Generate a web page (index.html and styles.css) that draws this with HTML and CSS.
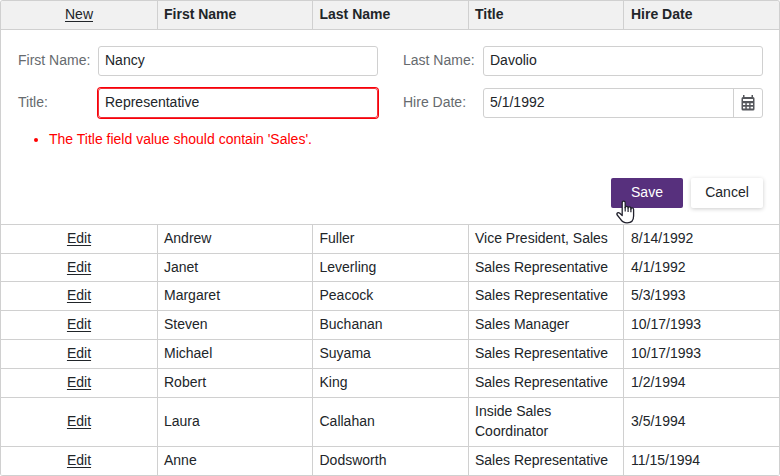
FILE: index.html
```html
<!DOCTYPE html>
<html lang="en">
<head>
<meta charset="utf-8">
<title>Employees</title>
<link rel="stylesheet" href="styles.css">
</head>
<body>
<main class="grid">
  <div class="row header"><div class="cell command"><a>New</a></div><div class="cell">First Name</div><div class="cell">Last Name</div><div class="cell">Title</div><div class="cell">Hire Date</div></div>
  <form class="edit-form">
    <div class="fields">
      <label class="field"><span class="caption">First Name:</span><span class="box">Nancy</span></label>
      <label class="field"><span class="caption">Last Name:</span><span class="box">Davolio</span></label>
      <label class="field"><span class="caption">Title:</span><span class="box invalid">Representative</span></label>
      <label class="field"><span class="caption">Hire Date:</span><span class="box date"><span>5/1/1992</span><span class="picker"><svg width="14" height="16" viewBox="0 0 14 16"><path fill="#55575c" fill-rule="evenodd" d="M2 0h1.500v2h7V0H12v2a1.500 1.500 0 0 1 1.500 1.500V14a1.500 1.500 0 0 1-1.500 1.500H2A1.500 1.500 0 0 1 .5 14V3.500A1.500 1.500 0 0 1 2 2ZM2 4v2h10V4ZM2 8.200v1.900h2.300V8.200Zm3.800 0v1.900h2.400V8.200Zm3.800 0v1.900H12V8.200ZM2 11.700v1.900h2.300v-1.900Zm3.800 0v1.900h2.400v-1.900Zm3.800 0v1.900H12v-1.900Z"/></svg></span></span></label>
    </div>
    <ul class="errors"><li>The Title field value should contain 'Sales'.</li></ul>
    <div class="buttons">
      <div class="button primary">Save
        <svg class="pointer" width="20" height="25" viewBox="0 0 20 25"><path fill="#fff" stroke="#20202c" stroke-width="1.300" stroke-linejoin="round" d="M6.200 15.500V2.700c0-2.200 3-2.200 3 0v5c0-1.900 2.900-1.900 2.900 0v.4c0-1.700 2.800-1.600 2.800.2v.7c0-1.600 2.700-1.500 2.700.5v6.500c0 4.200-2.500 6.900-6.500 6.900-3.400 0-5.200-1.300-6.600-3.800L1.200 15c-1-2 1-3.100 2.600-1.700Z"/><path fill="none" stroke="#20202c" stroke-width="1.200" d="M9.200 7v4.500M12.100 7.500V12M14.900 8.500v3.700"/></svg>
      </div>
      <div class="button">Cancel</div>
    </div>
  </form>
  <div class="row"><div class="cell command"><a>Edit</a></div><div class="cell">Andrew</div><div class="cell">Fuller</div><div class="cell">Vice President, Sales</div><div class="cell">8/14/1992</div></div>
  <div class="row"><div class="cell command"><a>Edit</a></div><div class="cell">Janet</div><div class="cell">Leverling</div><div class="cell">Sales Representative</div><div class="cell">4/1/1992</div></div>
  <div class="row"><div class="cell command"><a>Edit</a></div><div class="cell">Margaret</div><div class="cell">Peacock</div><div class="cell">Sales Representative</div><div class="cell">5/3/1993</div></div>
  <div class="row"><div class="cell command"><a>Edit</a></div><div class="cell">Steven</div><div class="cell">Buchanan</div><div class="cell">Sales Manager</div><div class="cell">10/17/1993</div></div>
  <div class="row"><div class="cell command"><a>Edit</a></div><div class="cell">Michael</div><div class="cell">Suyama</div><div class="cell">Sales Representative</div><div class="cell">10/17/1993</div></div>
  <div class="row"><div class="cell command"><a>Edit</a></div><div class="cell">Robert</div><div class="cell">King</div><div class="cell">Sales Representative</div><div class="cell">1/2/1994</div></div>
  <div class="row"><div class="cell command"><a>Edit</a></div><div class="cell">Laura</div><div class="cell">Callahan</div><div class="cell">Inside Sales Coordinator</div><div class="cell">3/5/1994</div></div>
  <div class="row"><div class="cell command"><a>Edit</a></div><div class="cell">Anne</div><div class="cell">Dodsworth</div><div class="cell">Sales Representative</div><div class="cell">11/15/1994</div></div>
</main>
</body>
</html>
```
FILE: styles.css
```css
* { box-sizing: border-box; }
body {
  margin: 0;
  background: #fff;
  color: #212529;
  font: 14px/20px "Liberation Sans", Arial, sans-serif;
}
.grid {
  display: grid;
  grid-template-rows: 29px 195px 29px 28px repeat(4, 29px) 49px 29px;
  width: 780px;
  height: 476px;
  border: 1px solid #d0d0d0;
  border-bottom: 0;
  border-radius: 3px;
  overflow: hidden;
}
.row {
  display: grid;
  grid-template-columns: 157px 155px 156px 155px 155px;
  border-bottom: 1px solid #d0d0d0;
}
.cell {
  display: flex;
  align-items: center;
  padding: 0 6px 2px;
  border-right: 1px solid #d0d0d0;
}
.cell:nth-child(3) { padding-left: 6.500px; }
.cell:last-child { padding-left: 7px; border-right: 0; }
.command { justify-content: center; font-weight: 400; }
.command a { text-decoration: underline; text-underline-offset: 2px; }
.header { background: #f1f1f1; font-weight: 700; }
.edit-form {
  padding: 16px 16px 0 17px;
  border-bottom: 1px solid #d0d0d0;
}
.fields {
  display: grid;
  grid-template-columns: 360px 360px;
  gap: 12px 25px;
}
.field { display: grid; grid-template-columns: 80px 280px; }
.caption { color: #666a6e; line-height: 29px; white-space: nowrap; }
.box {
  height: 30px;
  padding-left: 6px;
  border: 1px solid #d0d0d0;
  border-radius: 3px;
  line-height: 27px;
}
.invalid { border-color: #f03038; box-shadow: 0 0 0 1px #fa0008; }
.date { display: flex; justify-content: space-between; }
.picker {
  display: flex;
  align-items: center;
  justify-content: center;
  width: 29px;
  border-left: 1px solid #d0d0d0;
}
.errors {
  margin: 11px 0 0;
  padding-left: 31px;
  color: #f00;
}
.buttons {
  display: flex;
  justify-content: flex-end;
  gap: 8px;
  margin-top: 29px;
}
.button {
  position: relative;
  width: 72px;
  height: 30px;
  border-radius: 2px;
  box-shadow: 0 1px 4px #0003;
  line-height: 28px;
  text-align: center;
}
.primary { background: #57307d; color: #fff; box-shadow: none; }
.pointer { position: absolute; left: 5px; top: 22px; }
```
